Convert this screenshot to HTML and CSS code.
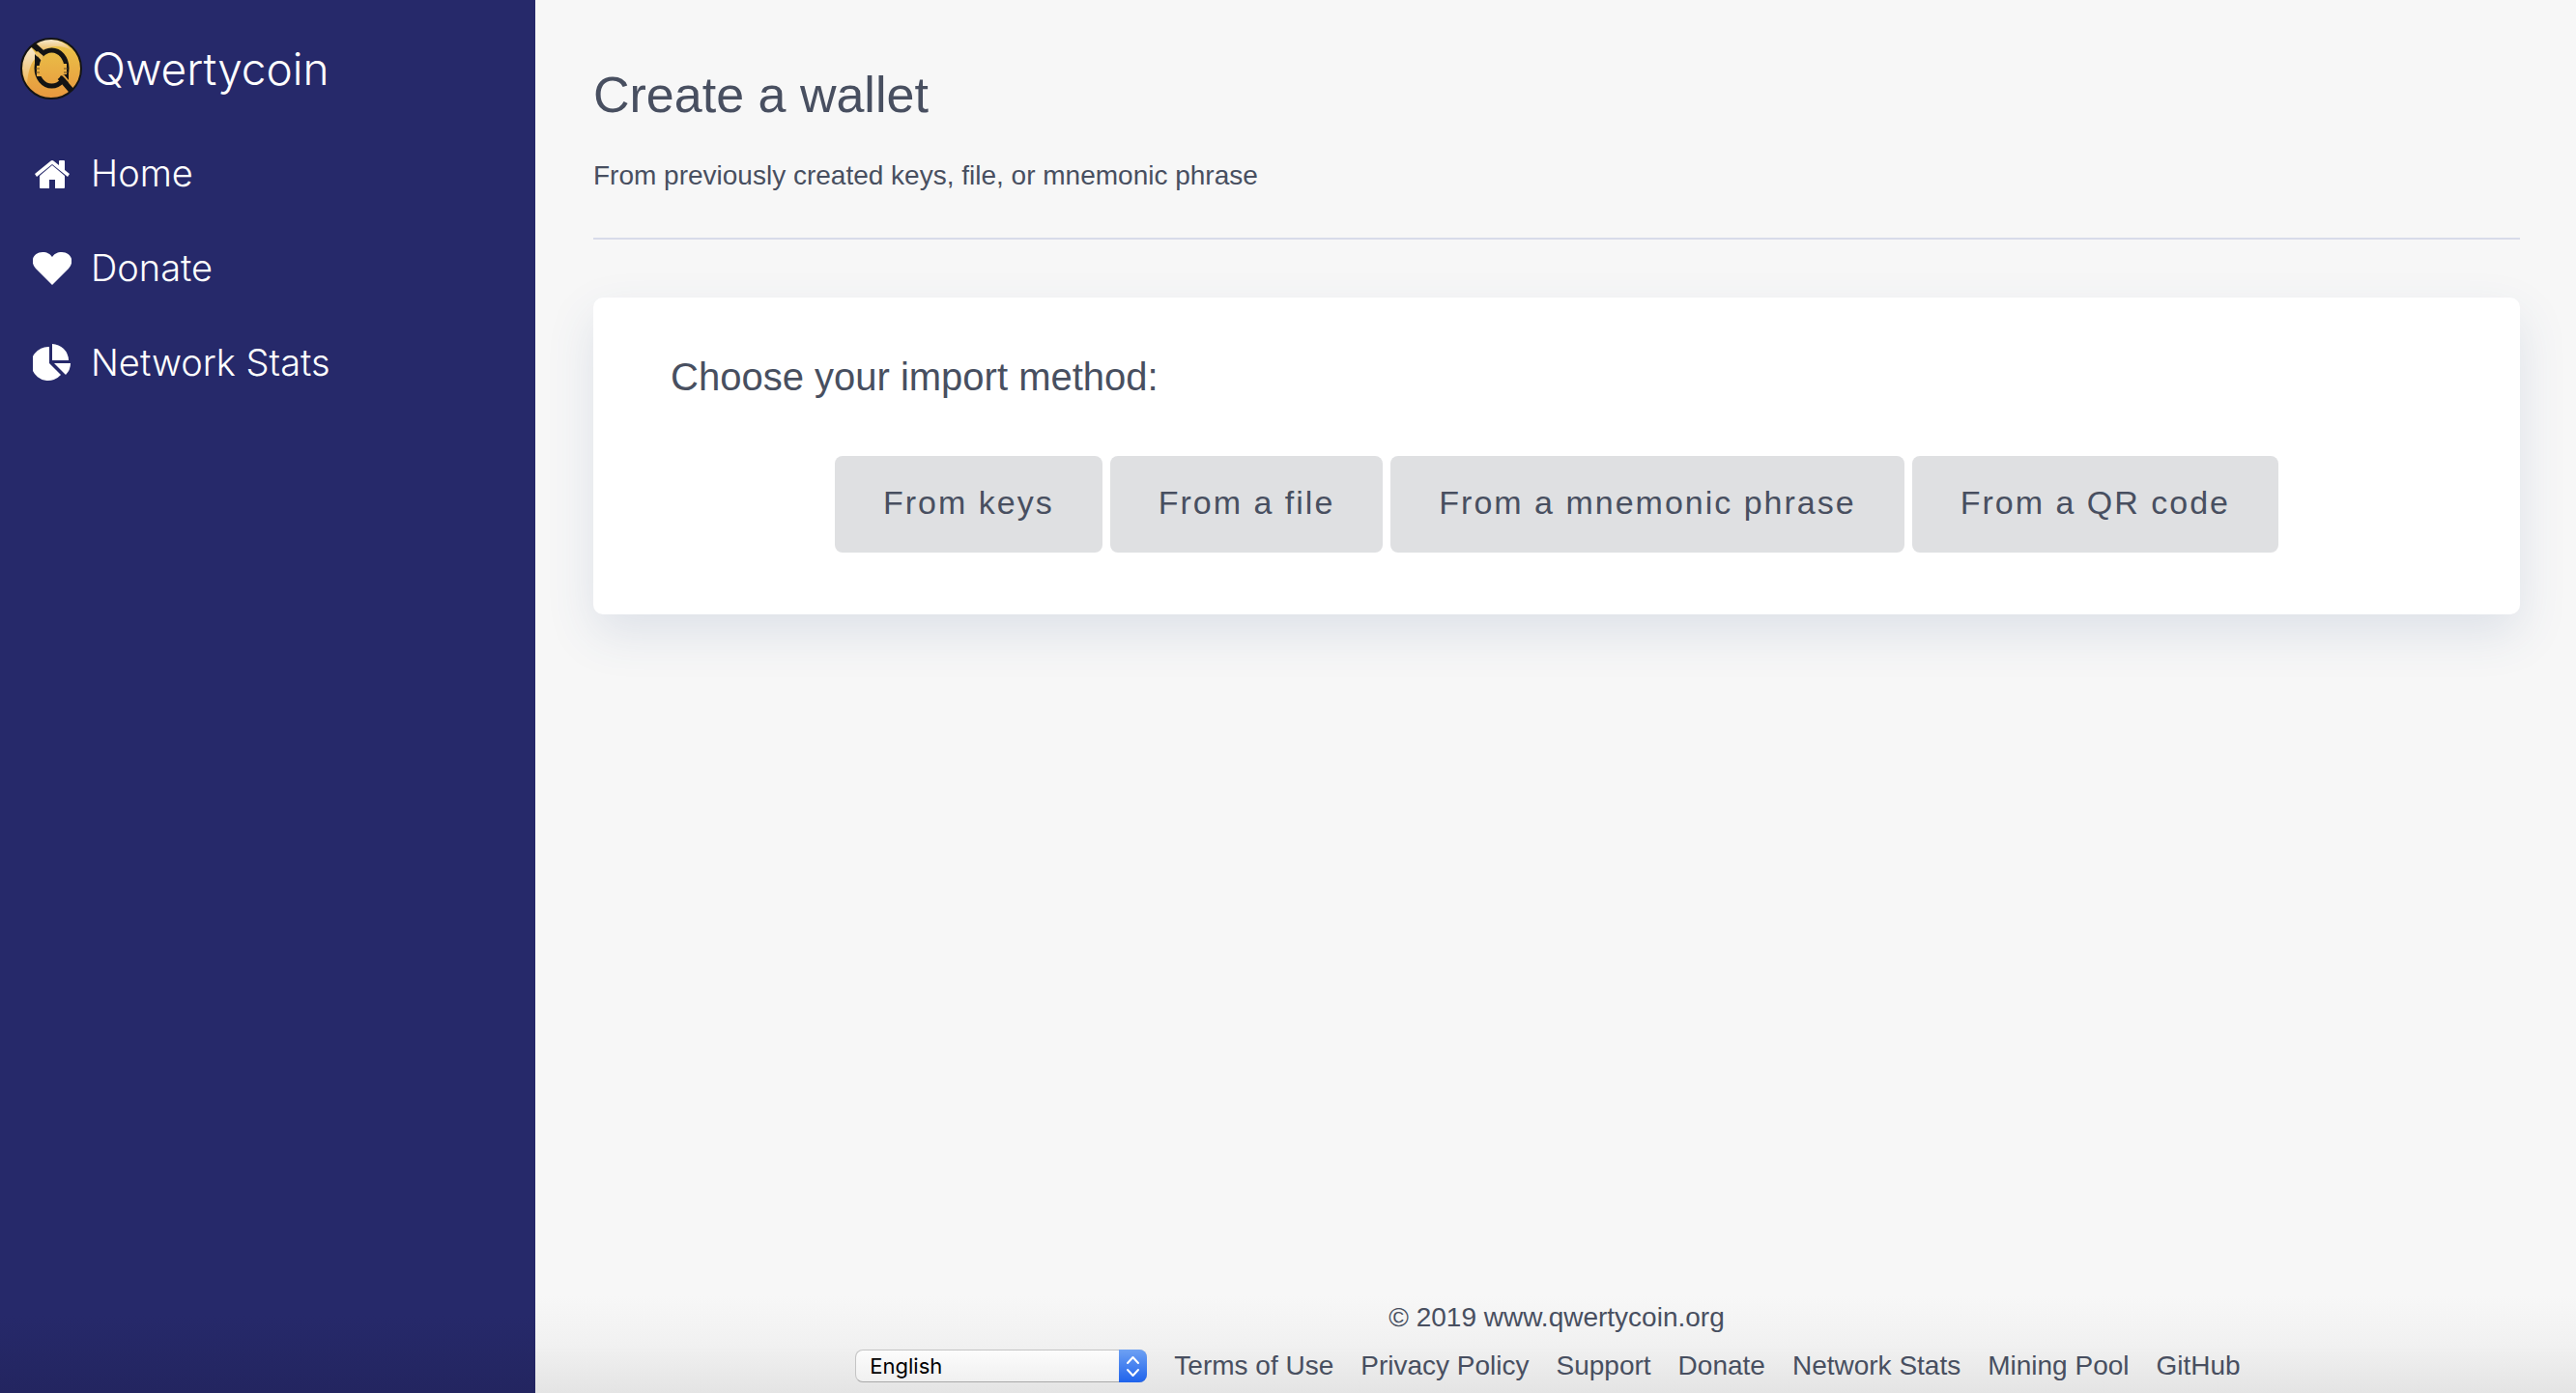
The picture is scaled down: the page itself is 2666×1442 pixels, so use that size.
FILE: index.html
```html
<!DOCTYPE html>
<html lang="en">
<head>
<meta charset="utf-8">
<title>Qwertycoin - Create a wallet</title>
<link rel="stylesheet" href="styles.css">
</head>
<body>
<aside class="sidebar">
  <a class="brand" href="#">
    <svg class="brand-logo" viewBox="0 0 64 64" aria-hidden="true">
      <defs>
        <linearGradient id="gold" gradientUnits="userSpaceOnUse" x1="0" y1="4" x2="0" y2="62"><stop offset="0" stop-color="#eac548"/><stop offset="1" stop-color="#e8983f"/></linearGradient>
        <linearGradient id="shine" x1="0" y1="0" x2="0" y2="1"><stop offset="0" stop-color="#f8ead0"/><stop offset="1" stop-color="#ecb85a"/></linearGradient>
      </defs>
      <circle cx="32" cy="32" r="31" fill="url(#gold)"/>
      <path d="M16 5C28 -1 44 1 53 13C42 7 30 8 24 14Z" fill="url(#shine)"/>
      <path d="M11 10C0 20 0 36 7 48C8 36 10 26 18 19Z" fill="url(#shine)"/>
      <ellipse cx="32.500" cy="31.500" rx="15.500" ry="18.500" fill="url(#gold)" stroke="#141414" stroke-width="5"/>
      <path d="M13 7L24 17M41 41L53 55" stroke="#141414" stroke-width="6" fill="none"/>
      <path d="M15 30V17L20 22ZM50 34V46L45 41Z" fill="#141414"/>
      <path d="M17 29H22V40H17ZM43 27H48V38H43Z" fill="url(#gold)"/>
      <path d="M15 16L22 24L24 19L18 14Z" fill="#edbf60"/>
      <path d="M50 47L42 39L40 43L47 50Z" fill="#141414"/>
      <path d="M50 46L43 39L45 38L50 44Z" fill="#e9a743"/>
      <path d="M16 32H20M16 36H20M45 32H49M45 36H49" stroke="#6d4c20" stroke-width="1"/>
      <circle cx="32" cy="32" r="31" fill="none" stroke="#141414" stroke-width="2"/>
    </svg>
    <span>Qwertycoin</span>
  </a>
  <nav class="menu">
    <a href="#">
      <svg class="icon" viewBox="0 0 40 40" fill="#fff" aria-hidden="true"><path d="M20 12L33 23V35Q33 36 32 36H23V27H17V36H8Q7 36 7 35V23Z"/><path d="M20 7Q21 7 22 8L27 12V8Q27 7 28 7H32Q33 7 33 8V17L38 21L36 24L20 11L4 24L2 21L18 8Q19 7 20 7Z"/></svg>
      <span>Home</span>
    </a>
    <a href="#">
      <svg class="icon" viewBox="0 0 40 40" fill="#fff" aria-hidden="true"><path d="M20 38L3 21C-4 13 1 4 10 4C15 4 18 6 20 9C22 6 25 4 30 4C39 4 44 13 37 21Z"/></svg>
      <span>Donate</span>
    </a>
    <a href="#">
      <svg class="icon" viewBox="0 0 40 40" fill="#fff" aria-hidden="true"><path d="M17 4V21L29 33A17.500 17.500 0 1 1 17 4ZM20 1A17.500 17.500 0 0 1 37 18H20ZM22 21H39Q39 28 34 33Z"/></svg>
      <span>Network Stats</span>
    </a>
  </nav>
</aside>
<div class="page">
  <main>
    <header class="heading">
      <h1>Create a wallet</h1>
      <p>From previously created keys, file, or mnemonic phrase</p>
    </header>
    <section class="card">
      <h2>Choose your import method:</h2>
      <div class="choices">
        <button type="button">From keys</button>
        <button type="button">From a file</button>
        <button type="button">From a mnemonic phrase</button>
        <button type="button">From a QR code</button>
      </div>
    </section>
  </main>
  <footer class="footer">
    <p>© 2019 www.qwertycoin.org</p>
    <div class="footer-row">
      <span class="language">
        <select aria-label="Language"><option>English</option><option>Deutsch</option></select>
        <svg viewBox="0 0 29 34" aria-hidden="true"><path d="M9 14L14.500 8L20 14M9 21L14.500 27L20 21" fill="none" stroke="#fff" stroke-width="2" stroke-linecap="round" stroke-linejoin="round"/></svg>
      </span>
      <a href="#">Terms of Use</a>
      <a href="#">Privacy Policy</a>
      <a href="#">Support</a>
      <a href="#">Donate</a>
      <a href="#">Network Stats</a>
      <a href="#">Mining Pool</a>
      <a href="#">GitHub</a>
    </div>
  </footer>
</div>
</body>
</html>
```
FILE: styles.css
```css
* { box-sizing: border-box; }

body {
  margin: 0;
  display: flex;
  min-height: 100vh;
  background: #f7f7f7;
  color: #484f60;
  font-family: "Liberation Sans", Arial, sans-serif;
  font-size: 28px;
  line-height: 40px;
}

h1, h2, p { margin: 0; font-weight: 400; }
a { color: inherit; text-decoration: none; }

.sidebar {
  flex: 0 0 554px;
  padding: 36px 21px;
  background: linear-gradient(to top, #232560, #26296a 80px);
  color: #fff;
  font-family: Inter, "Liberation Sans", sans-serif;
  font-weight: 300;
}

.brand {
  display: flex;
  align-items: center;
  gap: 10px;
  font-size: 46px;
  line-height: 70px;
}
.brand-logo { width: 64px; height: 64px; }

.menu {
  display: flex;
  flex-direction: column;
  gap: 28px;
  padding: 38px 13px;
}
.menu a {
  display: flex;
  align-items: center;
  gap: 20px;
  font-size: 38px;
  line-height: 70px;
}
.icon { width: 40px; height: 40px; }

.page {
  flex: 1;
  min-width: 0;
  display: flex;
  flex-direction: column;
  justify-content: space-between;
  padding: 58px 58px 8px 60px;
  background: linear-gradient(to top, #e4e4e4, #f1f1f1 50px, #f7f7f7 100px);
}

.heading {
  padding-bottom: 44px;
  border-bottom: 2px solid #d8dbea;
}
.heading h1 {
  margin-bottom: 24px;
  font-size: 52px;
  line-height: 80px;
}

.card {
  margin-top: 60px;
  padding: 52px 80px 64px;
  border-radius: 10px;
  background: #fff;
  box-shadow: 0 20px 50px rgba(54, 84, 140, 0.13);
}
.card h2 {
  margin-bottom: 52px;
  font-size: 40px;
  line-height: 60px;
}
.choices {
  display: flex;
  flex-wrap: wrap;
  justify-content: center;
  gap: 8px;
}
.choices button {
  height: 100px;
  padding: 0 50px 4px;
  border: 0;
  border-radius: 8px;
  background: #dfe0e2;
  color: inherit;
  font: inherit;
  font-size: 34px;
  letter-spacing: 2px;
}

.footer { text-align: center; }
.footer-row {
  display: flex;
  align-items: center;
  justify-content: center;
  gap: 28px;
  margin-top: 10px;
  padding-right: 18px;
}
.language { position: relative; display: flex; }
.language select {
  width: 302px;
  height: 34px;
  padding: 0 14px;
  border: 1px solid #c4c4c4;
  border-bottom-color: #a8a8a8;
  border-radius: 8px;
  appearance: none;
  background: linear-gradient(#fcfcfc, #f0f0f0);
  color: #000;
  font: 22px Inter, sans-serif;
}
.language svg {
  position: absolute;
  top: 0;
  right: 0;
  width: 29px;
  height: 34px;
  border-radius: 0 8px 8px 0;
  background: linear-gradient(#6ea1f3, #1f63ec);
  pointer-events: none;
}
```
